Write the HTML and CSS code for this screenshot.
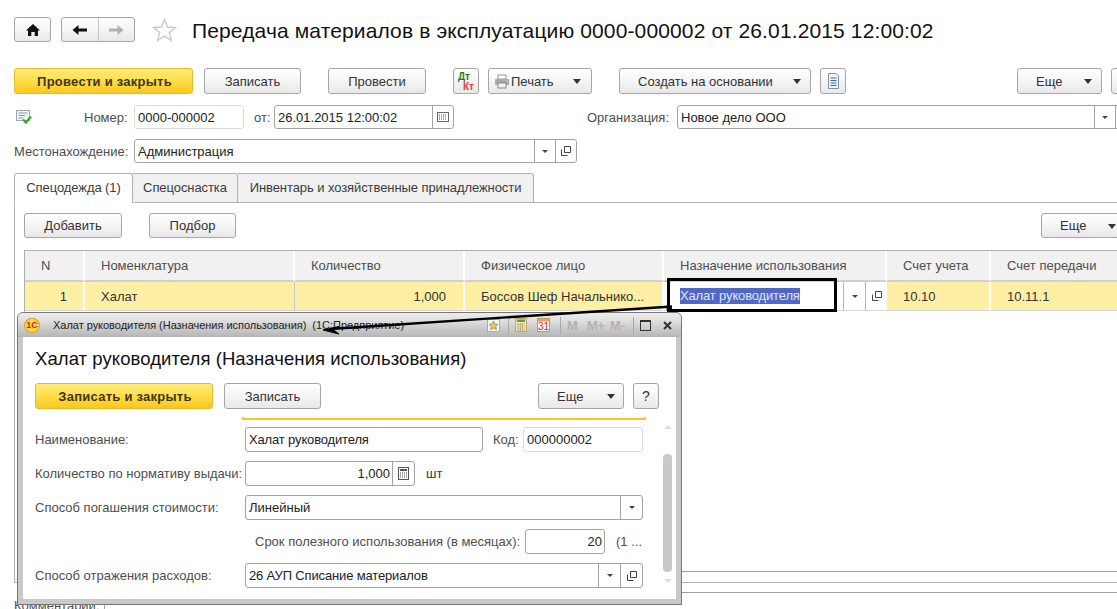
FILE: index.html
```html
<!DOCTYPE html>
<html lang="ru">
<head>
<meta charset="utf-8">
<title>Передача материалов в эксплуатацию</title>
<link rel="stylesheet" href="styles.css">
</head>
<body>
<div class="page">
  <header class="head">
    <button class="btn nav-home"><svg width="16" height="14" viewBox="0 0 16 14"><path d="M8 1 L15 7.5 H13 V13 H9.7 V9 H6.3 V13 H3 V7.5 H1 Z" fill="#111"/></svg></button>
    <div class="btn nav-pair">
      <span class="nav-cell"><svg width="16" height="12" viewBox="0 0 16 12"><path d="M0.5 6 L6.5 1 V4.5 H15 V7.5 H6.5 V11 Z" fill="#111"/></svg></span>
      <span class="nav-cell nav-cell-last"><svg width="16" height="12" viewBox="0 0 16 12"><path d="M15.5 6 L9.5 1 V4.5 H1 V7.5 H9.5 V11 Z" fill="#b0b0b0"/></svg></span>
    </div>
    <svg class="star" width="25" height="24" viewBox="0 0 25 24"><path d="M12.5 1.5 L15.5 9 L23.5 9.5 L17.3 14.6 L19.4 22.5 L12.5 18.1 L5.6 22.5 L7.7 14.6 L1.5 9.5 L9.5 9 Z" fill="#fff" stroke="#c9c9c9" stroke-width="1.4"/></svg>
    <h1 class="title">Передача материалов в эксплуатацию 0000-000002 от 26.01.2015 12:00:02</h1>
  </header>

  <div class="toolbar">
    <button class="btn btn-primary w-post">Провести и закрыть</button>
    <button class="btn w-save gap-10">Записать</button>
    <button class="btn w-post2 gap-27">Провести</button>
    <button class="btn w-icon gap-27 dtkt"><span class="dt">Дт</span><span class="kt">Кт</span></button>
    <button class="btn w-print gap-9">
      <svg width="16" height="15" viewBox="0 0 16 15"><rect x="4" y="1" width="8" height="4" fill="#fff" stroke="#999"/><rect x="1" y="5" width="14" height="6" rx="1" fill="#a9a9a9"/><rect x="4" y="9" width="8" height="5" fill="#f4f4f4" stroke="#888"/><rect x="12" y="6.5" width="2" height="1" fill="#e2d26a"/></svg>
      <span class="print-label">Печать</span><i class="caret caret-print"></i>
    </button>
    <button class="btn w-create gap-27"><span class="create-label">Создать на основании</span><i class="caret caret-create"></i></button>
    <button class="btn w-icon gap-9"><svg width="13" height="16" viewBox="0 0 13 16"><path d="M1.5 .5 H9 L11.5 3 V15.5 H1.5 Z" fill="#eef4fb" stroke="#7f93a8"/><path d="M3.5 5 H9.5 M3.5 7.5 H9.5 M3.5 10 H9.5 M3.5 12.5 H9.5" stroke="#3d6d9c"/></svg></button>
    <button class="btn w-more gap-more"><span class="more-label">Еще</span><i class="caret caret-more"></i></button>
    <button class="btn w-icon gap-9"></button>
  </div>

  <div class="form-row row-number">
    <svg class="doc-state" width="16" height="14" viewBox="0 0 16 14"><rect x=".5" y=".5" width="13" height="10" fill="#eef3f8" stroke="#9aa7b5"/><path d="M2.5 3 H11.5 M2.5 5.5 H9 M2.5 8 H7" stroke="#8ba0b5"/><path d="M7 9.5 L10 12.5 L15 6.5" fill="none" stroke="#39a52c" stroke-width="2.2"/></svg>
    <span class="label lbl-number">Номер:</span>
    <div class="field field-light f-number"><span class="val">0000-000002</span></div>
    <span class="label lbl-from">от:</span>
    <div class="field f-date"><span class="val grow">26.01.2015 12:00:02</span><span class="cell cell-date"><svg width="12" height="10" viewBox="0 0 12 10"><rect x=".5" y=".5" width="11" height="9" fill="#fff" stroke="#666"/><path d="M2 3 H10 M2 5 H10 M2 7 H10" stroke="#555" stroke-dasharray="1 1"/></svg></span></div>
    <span class="label lbl-org">Организация:</span>
    <div class="field f-org"><span class="val grow">Новое дело ООО</span><span class="cell cell-drop"><i class="caret-sm"></i></span><span class="cell cell-drop"></span></div>
  </div>

  <div class="form-row row-place">
    <span class="label lbl-place">Местонахождение:</span>
    <div class="field f-place"><span class="val grow">Администрация</span><span class="cell cell-drop"><i class="caret-sm"></i></span><span class="cell cell-drop"><svg class="link" width="10" height="10" viewBox="0 0 10 10"><path d="M3.5 .5 H9.5 V6.5 H3.5 Z M.5 3.5 V9.5 H6.5" fill="none" stroke="#444"/></svg></span></div>
  </div>

  <nav class="tabs">
    <span class="tab tab-active tab-1">Спецодежда (1)</span>
    <span class="tab tab-2">Спецоснастка</span>
    <span class="tab tab-3">Инвентарь и хозяйственные принадлежности</span>
  </nav>

  <section class="panel">
    <div class="panel-tools">
      <button class="btn w-add">Добавить</button>
      <button class="btn w-pick gap-27">Подбор</button>
      <button class="btn w-more2 gap-more2"><span class="more-label">Еще</span><i class="caret caret-more"></i></button>
    </div>
    <div class="grid">
      <div class="gh gh-n">N</div>
      <div class="gh">Номенклатура</div>
      <div class="gh">Количество</div>
      <div class="gh">Физическое лицо</div>
      <div class="gh">Назначение использования</div>
      <div class="gh">Счет учета</div>
      <div class="gh">Счет передачи</div>
      <div class="gc gc-n">1</div>
      <div class="gc gc-line">Халат</div>
      <div class="gc gc-num">1,000</div>
      <div class="gc">Боссов Шеф Начальнико...</div>
      <div class="gc gc-edit"><span class="edit-text"><span class="selected">Халат руководителя</span></span><span class="cell cell-edit"><i class="caret-sm"></i></span><span class="cell cell-edit"><svg class="link" width="10" height="10" viewBox="0 0 10 10"><path d="M3.5 .5 H9.5 V6.5 H3.5 Z M.5 3.5 V9.5 H6.5" fill="none" stroke="#444"/></svg></span></div>
      <div class="gc">10.10</div>
      <div class="gc">10.11.1</div>
      <div class="focus-rect"></div>
    </div>
  </section>
  <div class="footer-line"></div>
  <div class="comment-row">
    <span class="label">Комментарий:</span>
    <span class="comment-input"></span>
  </div>
</div>

<div class="win">
  <div class="win-bar">
    <span class="logo">1С</span>
    <span class="win-title">Халат руководителя (Назначения использования)&nbsp; (1С:Предприятие)</span>
    <span class="win-tools">
      <svg width="13" height="13" viewBox="0 0 13 13"><rect x=".5" y=".5" width="12" height="12" fill="#eef4f8" stroke="#9db1bd"/><path d="M6.5 2 L8 5 L11 5.3 L8.8 7.4 L9.4 10.5 L6.5 9 L3.6 10.5 L4.2 7.4 L2 5.3 L5 5 Z" fill="#e8c65a" stroke="#8a7a45" stroke-width=".6"/></svg>
      <i class="win-sep sep-a"></i>
      <svg width="12" height="14" viewBox="0 0 12 14"><rect x=".5" y=".5" width="11" height="13" fill="#f8e8b0" stroke="#b9a56a"/><rect x="2" y="1.5" width="8" height="2.5" fill="#58a04a"/><path d="M2.5 6 H9.5 M2.5 8 H9.5 M2.5 10 H9.5 M2.5 12 H9.5" stroke="#6d6d45" stroke-dasharray="1.2 1"/></svg>
      <svg class="cal" width="13" height="15" viewBox="0 0 13 15"><rect x=".5" y="1.5" width="12" height="13" fill="#fffaf0" stroke="#c09a68"/><rect x="1" y="2" width="11" height="2.5" fill="#eaa25c"/><text x="6.5" y="13" text-anchor="middle" class="cal-num">31</text></svg>
      <i class="win-sep sep-b"></i>
      <span class="mem mem-m">M</span><span class="mem mem-p">M+</span><span class="mem mem-n">M-</span>
      <i class="win-sep sep-c"></i>
      <i class="win-max"></i>
      <svg class="win-x" width="9" height="9" viewBox="0 0 9 9"><path d="M1 1 L8 8 M8 1 L1 8" stroke="#333" stroke-width="2"/></svg>
    </span>
  </div>
  <div class="win-body">
    <h2 class="win-heading">Халат руководителя (Назначения использования)</h2>
    <div class="win-toolbar">
      <button class="btn btn-primary w-wclose">Записать и закрыть</button>
      <button class="btn w-save gap-10">Записать</button>
      <button class="btn w-wmore gap-wmore"><span class="more-label">Еще</span><i class="caret caret-wmore"></i></button>
      <button class="btn w-help gap-9">?</button>
    </div>
    <div class="yellow-strip"></div>
    <div class="win-row">
      <span class="label win-label">Наименование:</span>
      <div class="field f-wname"><span class="val val-tight">Халат руководителя</span></div>
      <span class="label lbl-code">Код:</span>
      <div class="field field-light f-code"><span class="val">000000002</span></div>
    </div>
    <div class="win-row">
      <span class="label win-label">Количество по нормативу выдачи:</span>
      <div class="field f-qty"><span class="val val-num grow">1,000</span><span class="cell cell-calc"><svg width="11" height="13" viewBox="0 0 11 13"><rect x=".5" y=".5" width="10" height="12" fill="#fff" stroke="#555"/><rect x="2" y="2" width="7" height="2" fill="#555"/><path d="M2 6 H9 M2 8 H9 M2 10 H9" stroke="#555" stroke-dasharray="1 1"/></svg></span></div>
      <span class="unit">шт</span>
    </div>
    <div class="win-row">
      <span class="label win-label">Способ погашения стоимости:</span>
      <div class="field f-wide"><span class="val grow">Линейный</span><span class="cell cell-drop cell-wdrop"><i class="caret-sm"></i></span></div>
    </div>
    <div class="win-row">
      <span class="label lbl-term">Срок полезного использования (в месяцах):</span>
      <div class="field f-term"><span class="val val-num grow">20</span></div>
      <span class="label lbl-dots">(1 ...</span>
    </div>
    <div class="win-row">
      <span class="label win-label">Способ отражения расходов:</span>
      <div class="field f-wide"><span class="val val-tight grow">26 АУП Списание материалов</span><span class="cell cell-drop cell-wdrop"><i class="caret-sm"></i></span><span class="cell cell-drop cell-wdrop"><svg class="link" width="10" height="10" viewBox="0 0 10 10"><path d="M3.5 .5 H9.5 V6.5 H3.5 Z M.5 3.5 V9.5 H6.5" fill="none" stroke="#444"/></svg></span></div>
    </div>
    <div class="scrollbar"><i class="sb-up"></i><i class="sb-thumb"></i><i class="sb-down"></i></div>
  </div>
</div>

<svg class="arrow" width="1117" height="609" viewBox="0 0 1117 609">
  <path d="M672 306.5 L330 329" fill="none" stroke="#000" stroke-width="2.4"/>
  <path d="M323 330 L339 326.5 L333 329.5 L339 334 Z" fill="#000" stroke="#000"/>
  <path d="M669 304.5 L674 311 L666 310 Z" fill="#000"/>
</svg>
</body>
</html>
```

FILE: styles.css
```css
* { box-sizing: border-box; }
html, body {
  margin: 0;
  height: 609px;
  overflow: hidden;
  background: #fff;
}
body {
  position: relative;
  font: 13px "Liberation Sans", Arial, sans-serif;
  color: #333;
}
.page {
  width: 1130px;
  padding: 17px 0 0 14px;
}
.head { display: flex; align-items: center; height: 25px; }
.btn {
  display: inline-flex;
  align-items: center;
  justify-content: center;
  height: 26px;
  padding: 0;
  border: 1px solid #a6a6a6;
  border-radius: 3px;
  background: linear-gradient(#ffffff, #f6f6f6 45%, #e8e8e8);
  font: 13px "Liberation Sans", Arial, sans-serif;
  color: #333;
  flex: none;
  position: relative;
}
.nav-home { width: 37px; height: 25px; }
.nav-pair { width: 74px; height: 25px; margin-left: 10px; }
.nav-cell { flex: 1; height: 100%; display: flex; align-items: center; justify-content: center; }
.nav-cell-last { border-left: 1px solid #c6c6c6; }
.star { margin-left: 17px; flex: none; }
.title {
  margin: 3px 0 0 15px;
  font: 400 21px "Liberation Sans", Arial, sans-serif;
  letter-spacing: .13px;
  color: #111;
  white-space: nowrap;
}
.toolbar { display: flex; margin-top: 26px; height: 26px; }
.btn-primary {
  padding-left: 2px;
  border-color: #e6bb2c;
  background: linear-gradient(#ffec78, #fedd4a 50%, #fac81e);
  font-weight: 700;
  letter-spacing: .25px;
  color: #3f3515;
}
.w-post { width: 179px; }
.w-save { width: 97px; }
.w-post2 { width: 98px; }
.w-icon { width: 26px; }
.w-print { width: 104px; justify-content: flex-start; padding-left: 5px; }
.w-create { width: 192px; justify-content: flex-start; }
.w-more { width: 85px; justify-content: flex-start; }
.w-add { width: 98px; height: 25px; }
.w-pick { width: 87px; height: 25px; }
.w-more2 { width: 90px; height: 25px; justify-content: flex-start; }
.gap-9 { margin-left: 9px; }
.gap-10 { margin-left: 11px; }
.gap-27 { margin-left: 27px; }
.gap-more { margin-left: 171px; }
.gap-more2 { margin-left: 805px; }
.print-label { margin-left: 1px; }
.create-label { margin-left: 18px; }
.more-label { margin-left: 18px; }
.caret { position: absolute; top: 10px; width: 0; height: 0; border: 4.5px solid transparent; border-bottom: 0; border-top: 5px solid #333; }
.caret-print { left: 84px; }
.caret-create { left: 173px; }
.caret-more { left: 66px; }
.caret-wmore { left: 68px; }
.caret-sm { width: 0; height: 0; border: 3px solid transparent; border-bottom: 0; border-top: 3px solid #444; }
.dtkt { display: block; font-weight: 700; font-size: 10px; line-height: 10px; }
.dt { display: block; color: #1d7d13; margin: 2px 0 0 4px; text-align: left; }
.kt { display: block; color: #f0383c; margin-left: 9px; text-align: left; }

.form-row { display: flex; align-items: center; height: 24px; }
.row-number { margin-top: 11px; }
.row-place { margin-top: 10px; }
.label { color: #4e4e4e; white-space: nowrap; flex: none; }
.doc-state { margin-left: 2px; flex: none; }
.lbl-number { margin-left: 52px; width: 50px; }
.lbl-from { margin-left: 10px; width: 20px; }
.lbl-org { margin-left: 133px; width: 90px; }
.lbl-place { width: 120px; }
.field {
  display: flex;
  align-items: center;
  height: 24px;
  border: 1px solid #a3a3a3;
  border-radius: 3px;
  background: #fff;
  flex: none;
  color: #222;
}
.field-light { border-color: #dcdcdc; }
.val { padding-left: 3px; white-space: nowrap; }
.val-tight { letter-spacing: -.15px; }
.grow { flex: 1; }
.val-num { text-align: right; padding-right: 2px; }
.cell { height: 100%; border-left: 1px solid #a3a3a3; display: flex; align-items: center; justify-content: center; flex: none; }
.f-number { width: 110px; }
.f-date { width: 180px; }
.cell-date { width: 21px; }
.f-org { width: 460px; }
.f-place { width: 443px; }
.cell-drop { width: 21px; }

.tabs { display: flex; margin-top: 10px; height: 30px; }
.tab {
  height: 30px;
  padding-top: 6px;
  border: 1px solid #b0b0b0;
  border-left-width: 0;
  border-radius: 0 3px 0 0;
  background: #f1f1f1;
  letter-spacing: -.08px;
  color: #3c3c3c;
  text-align: center;
  position: relative;
}
.tab-active { background: #fff; border-bottom-color: #fff; border-left-width: 1px; border-radius: 3px 3px 0 0; z-index: 1; }
.tab-1 { width: 119px; }
.tab-2 { width: 105px; }
.tab-3 { width: 296px; }
.panel {
  height: 381px;
  margin-top: -1px;
  border: 1px solid #b0b0b0;
  border-right: 0;
  padding: 10px 0 0 9px;
}
.panel-tools { display: flex; height: 25px; }
.grid {
  position: relative;
  display: grid;
  grid-template-columns: 60px 210px 170px 199px 223px 104px 140px;
  grid-template-rows: 31px 29px;
  align-content: start;
  margin-top: 12px;
  height: 322px;
  border-top: 1px solid #b0b0b0;
  border-bottom: 1px solid #a0a0a0;
  border-left: 1px solid #b0b0b0;
}
.gh {
  display: flex;
  align-items: center;
  padding-left: 16px;
  background: #f1f1f1;
  border-right: 2px solid #fff;
  border-bottom: 2px solid #cfcfcf;
  color: #4e4e4e;
}
.gc {
  display: flex;
  align-items: center;
  padding-left: 16px;
  background: #fdf0a5;
  border-right: 2px solid #fff;
  border-bottom: 1px solid #d8d8d8;
  color: #333;
  white-space: nowrap;
}
.gc-line { border-right: 1px solid #c9c9c9; }
.gc-n { justify-content: flex-end; padding: 0 16px 0 0; }
.gc-num { justify-content: flex-end; padding: 0 17px 0 0; }
.gc-edit { padding-left: 0; background: #fff; border-right: 0; }
.edit-text { flex: 1; padding-left: 16px; }
.selected { background: #5068c4; color: #dfe4f8; display: inline-block; line-height: 16px; letter-spacing: -.15px; }
.cell-edit { width: 22px; border-left-color: #b5b5b5; }
.focus-rect {
  position: absolute;
  left: 642px;
  top: 27px;
  width: 170px;
  height: 34px;
  border: 3px solid #000;
}
.footer-line { margin: 9px 0 0 20px; border-top: 1px solid #a0a0a0; }
.comment-row { position: relative; height: 20px; margin-top: 1px; padding-top: 4px; }
.comment-input { position: absolute; left: 90px; top: 3px; width: 1px; height: 24px; background: #a3a3a3; }

.win {
  position: absolute;
  left: 17px;
  top: 312px;
  width: 665px;
  height: 293px;
  border: 1px solid #777;
  border-radius: 6px 6px 0 0;
  background: #c9c9c9;
  display: flex;
  flex-direction: column;
}
.win-bar {
  position: relative;
  display: flex;
  align-items: center;
  height: 24px;
  flex: none;
  border-radius: 5px 5px 0 0;
  background: linear-gradient(#ececec, #e0e0e0 30%, #b5b5b5);
}
.logo {
  width: 16px;
  height: 15px;
  margin-left: 6px;
  border-radius: 50%;
  background: #fed93f;
  border: 1px solid #d99a2b;
  color: #d2232a;
  font: 700 9px/13px "Liberation Sans", Arial, sans-serif;
  text-align: center;
  flex: none;
}
.win-title { margin-left: 13px; font-size: 11px; color: #222; white-space: nowrap; letter-spacing: -.03px; }
.win-tools { position: absolute; inset: 0; }
.win-tools > * { position: absolute; }
.win-tools > svg:nth-child(1) { left: 469px; top: 6px; }
.win-tools > svg:nth-child(3) { left: 497px; top: 5px; }
.win-tools > .cal { left: 519px; top: 4px; }
.cal-num { font: 400 10px "Liberation Sans", Arial, sans-serif; fill: #d8261f; }
.win-sep { top: 4px; width: 1px; height: 17px; background: #a8a8a8; }
.sep-a { left: 490px; }
.sep-b { left: 542px; }
.sep-c { left: 615px; }
.mem { top: 4px; font: 700 13px/17px "Liberation Sans", Arial, sans-serif; color: #b9b0aa; }
.mem-m { left: 549px; }
.mem-p { left: 569px; letter-spacing: -.5px; }
.mem-n { left: 592px; }
.win-max { left: 622px; top: 7px; width: 11px; height: 11px; border: 1px solid #333; border-top-width: 2px; }
.win-x { left: 645px; top: 8px; }
.win-body {
  position: relative;
  flex: 1;
  margin: 0 5px 5px 5px;
  background: #fff;
  padding: 10px 0 0 12px;
  border: 0;
}
.win-heading {
  margin: 0;
  font: 400 18.5px/24px "Liberation Sans", Arial, sans-serif;
  color: #111;
  letter-spacing: .07px;
}
.win-toolbar { display: flex; margin-top: 12px; height: 26px; }
.w-wclose { width: 178px; }
.w-wmore { width: 86px; justify-content: flex-start; }
.gap-wmore { margin-left: 217px; }
.w-help { width: 26px; font-size: 14px; }
.yellow-strip {
  margin: 8px 0 0 207px;
  width: 404px;
  height: 3px;
  border: 2px solid #fbc91f;
  border-top: 0;
  border-bottom-width: 2px;
}
.win-row { display: flex; align-items: center; height: 25px; margin-top: 9px; }
.yellow-strip + .win-row { margin-top: 7px; }
.win-row .field { height: 25px; }
.win-label { width: 210px; }
.f-wname { width: 238px; }
.lbl-code { margin-left: 10px; width: 30px; }
.f-code { width: 120px; }
.f-qty { width: 170px; }
.cell-calc { width: 22px; }
.unit { margin-left: 11px; color: #333; }
.f-wide { width: 398px; }
.cell-wdrop { width: 22px; }
.lbl-term { margin-left: 220px; width: 270px; }
.f-term { width: 80px; }
.lbl-dots { margin-left: 11px; }
.scrollbar { position: absolute; left: 640px; top: 0; bottom: 0; width: 9px; }
.scrollbar i { position: absolute; display: block; }
.sb-up { top: 88px; left: 1px; width: 0; height: 0; border: 4px solid transparent; border-top: 0; border-bottom: 4px solid #dedede; }
.sb-thumb { top: 117px; left: 0; width: 9px; height: 118px; border-radius: 4px; background: #c9c9c9; }
.sb-down { top: 242px; left: 1px; width: 0; height: 0; border: 4px solid transparent; border-bottom: 0; border-top: 4px solid #dedede; }
.arrow { position: absolute; left: 0; top: 0; pointer-events: none; }
```
